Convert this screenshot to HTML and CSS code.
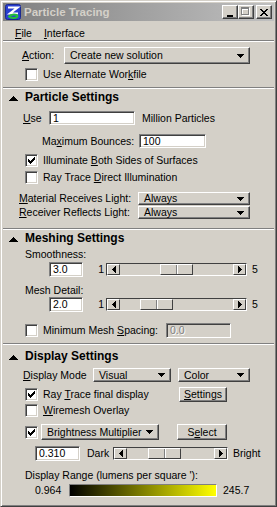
FILE: index.html
```html
<!DOCTYPE html>
<html lang="en">
  <head>
    <meta charset="UTF-8" />
    <meta name="viewport" content="width=device-width, initial-scale=1" />
    <title>Particle Tracing</title>
    <link rel="stylesheet" href="styles.css">
  </head>
  <body>
    <div class="window">
      <div class="titlebar">
        <svg class="app-icon" width="16" height="16" viewBox="0 0 16 16">
          <rect x="0.5" y="0.5" width="15" height="15" rx="2" fill="#2a3fd0" stroke="#1a2890" />
          <path d="M3 3.5 H12.5 L5 9.5 H13" fill="none" stroke="#fff" stroke-width="2.2" />
          <path d="M4 12.5 C6 9.5 12 10 12.5 12 C12 14.5 6 14.5 4 12.5 Z" fill="none" stroke="#22c03a" stroke-width="2" />
        </svg>
        <span class="title">Particle Tracing</span>
        <div class="caption-buttons">
          <span class="cap-btn">
            <svg width="8" height="9" viewBox="0 0 8 9" shape-rendering="crispEdges">
              <rect x="1" y="7" width="6" height="2" fill="#000" />
            </svg>
          </span>
          <span class="cap-btn">
            <svg width="10" height="10" viewBox="0 0 10 10" shape-rendering="crispEdges">
              <path d="M1 1h8v8h-8z M2 3v5h6v-5z" fill="#fff" fill-rule="evenodd" />
              <path d="M0 0h8v8h-8z M1 2v5h6v-5z" fill="#808080" fill-rule="evenodd" />
            </svg>
          </span>
          <span class="cap-btn close">
            <svg width="8" height="7" viewBox="0 0 8 7" shape-rendering="crispEdges">
              <path d="M0 0h2v1h1v1h2v-1h1v-1h2v1h-1v1h-1v1h-1v1h1v1h1v1h1v1h-2v-1h-1v-1h-2v1h-1v1h-2v-1h1v-1h1v-1h1v-1h-1v-1h-1v-1h-1z" fill="#000" />
            </svg>
          </span>
        </div>
      </div>

      <div class="menubar">
        <span class="menu-item"><u>F</u>ile</span>
        <span class="menu-item"><u>I</u>nterface</span>
      </div>
      <div class="groove"></div>

      <!-- Action -->
      <div class="row h17 mt-5 pl-19">
        <span class="lbl w-42"><u>A</u>ction:</span>
        <div class="dropdown w-186">
          <span>Create new solution</span>
          <svg class="dd-arrow" width="7" height="4" viewBox="0 0 7 4" shape-rendering="crispEdges"><path d="M0 0h7v1h-1v1h-1v1h-1v1h-1v-1h-1v-1h-1v-1h-1z" /></svg>
        </div>
      </div>
      <div class="row h13 mt-4 pl-22">
        <span class="checkbox"></span>
        <span class="cb-label">Use Alternate Wor<u>k</u>file</span>
      </div>
      <div class="groove mt-6"></div>

      <!-- Particle Settings -->
      <div class="section-head mt-1">
        <svg class="collapse" width="9" height="5" viewBox="0 0 9 5" shape-rendering="crispEdges"><path d="M4 0h1v1h1v1h1v1h1v1h1v1h-9v-1h1v-1h1v-1h1v-1h1z" /></svg>
        <span>Particle Settings</span>
      </div>
      <div class="row h14 mt-7 pl-20">
        <span class="lbl w-26"><u>U</u>se</span>
        <span class="field w-86">1</span>
        <span class="ml-7">Million Particles</span>
      </div>
      <div class="row h14 mt-9 pl-39">
        <span class="lbl w-97">Ma<u>x</u>imum Bounces:</span>
        <span class="field w-67">100</span>
      </div>
      <div class="row h13 mt-6 pl-22">
        <span class="checkbox checked"><svg width="7" height="7" viewBox="0 0 7 7" shape-rendering="crispEdges"><path d="M6 0h1v3h-1v1h-1v1h-1v1h-1v1h-1v-1h-1v-1h-1v-3h1v1h1v1h1v-1h1v-1h1z" /></svg></span>
        <span class="cb-label">Illuminate <u>B</u>oth Sides of Surfaces</span>
      </div>
      <div class="row h13 mt-4 pl-22">
        <span class="checkbox"></span>
        <span class="cb-label">Ray Trace <u>D</u>irect Illumination</span>
      </div>
      <div class="row h13 mt-8 pl-16">
        <span class="lbl w-119"><u>M</u>aterial Receives Light:</span>
        <div class="dropdown w-112">
          <span>Always</span>
          <svg class="dd-arrow" width="7" height="4" viewBox="0 0 7 4" shape-rendering="crispEdges"><path d="M0 0h7v1h-1v1h-1v1h-1v1h-1v-1h-1v-1h-1v-1h-1z" /></svg>
        </div>
      </div>
      <div class="row h13 mt-1 pl-16">
        <span class="lbl w-119"><u>R</u>eceiver Reflects Light:</span>
        <div class="dropdown w-112">
          <span>Always</span>
          <svg class="dd-arrow" width="7" height="4" viewBox="0 0 7 4" shape-rendering="crispEdges"><path d="M0 0h7v1h-1v1h-1v1h-1v1h-1v-1h-1v-1h-1v-1h-1z" /></svg>
        </div>
      </div>
      <div class="groove mt-9"></div>

      <!-- Meshing Settings -->
      <div class="section-head mt-1">
        <svg class="collapse" width="9" height="5" viewBox="0 0 9 5" shape-rendering="crispEdges"><path d="M4 0h1v1h1v1h1v1h1v1h1v1h-9v-1h1v-1h1v-1h1v-1h1z" /></svg>
        <span>Meshing Settings</span>
      </div>
      <div class="row h13 mt-3 pl-22">Smoothness:</div>
      <div class="row h15 mt-1 pl-46">
        <span class="field w-34">3.0</span>
        <span class="scale-min">1</span>
        <div class="slider w-141">
          <span class="arrow-btn"><svg width="4" height="7" viewBox="0 0 4 7" shape-rendering="crispEdges"><path d="M4 0v7h-1v-1h-1v-1h-1v-1h-1v-1h1v-1h1v-1h1v-1z" /></svg></span>
          <span class="track"><span class="thumb" style="margin-left: 40px"></span></span>
          <span class="arrow-btn"><svg width="4" height="7" viewBox="0 0 4 7" shape-rendering="crispEdges"><path d="M0 0v7h1v-1h1v-1h1v-1h1v-1h-1v-1h-1v-1h-1v-1z" /></svg></span>
        </div>
        <span class="ml-5">5</span>
      </div>
      <div class="row h13 mt-7 pl-22">Mesh Detail:</div>
      <div class="row h15 pl-46">
        <span class="field w-34">2.0</span>
        <span class="scale-min">1</span>
        <div class="slider w-141">
          <span class="arrow-btn"><svg width="4" height="7" viewBox="0 0 4 7" shape-rendering="crispEdges"><path d="M4 0v7h-1v-1h-1v-1h-1v-1h-1v-1h1v-1h1v-1h1v-1z" /></svg></span>
          <span class="track"><span class="thumb" style="margin-left: 20px"></span></span>
          <span class="arrow-btn"><svg width="4" height="7" viewBox="0 0 4 7" shape-rendering="crispEdges"><path d="M0 0v7h1v-1h1v-1h1v-1h1v-1h-1v-1h-1v-1h-1v-1z" /></svg></span>
        </div>
        <span class="ml-5">5</span>
      </div>
      <div class="row h15 mt-11 pl-22">
        <span class="checkbox"></span>
        <span class="cb-label w-123">Minimum Mesh <u>S</u>pacing:</span>
        <span class="field disabled w-65">0.0</span>
      </div>
      <div class="groove mt-5"></div>

      <!-- Display Settings -->
      <div class="section-head mt-4">
        <svg class="collapse" width="9" height="5" viewBox="0 0 9 5" shape-rendering="crispEdges"><path d="M4 0h1v1h1v1h1v1h1v1h1v1h-9v-1h1v-1h1v-1h1v-1h1z" /></svg>
        <span>Display Settings</span>
      </div>
      <div class="row h14 mt-5 pl-20">
        <span class="lbl w-70"><u>D</u>isplay Mode</span>
        <div class="dropdown w-78">
          <span>Visual</span>
          <svg class="dd-arrow" width="7" height="4" viewBox="0 0 7 4" shape-rendering="crispEdges"><path d="M0 0h7v1h-1v1h-1v1h-1v1h-1v-1h-1v-1h-1v-1h-1z" /></svg>
        </div>
        <div class="dropdown w-72 ml-7">
          <span>Color</span>
          <svg class="dd-arrow" width="7" height="4" viewBox="0 0 7 4" shape-rendering="crispEdges"><path d="M0 0h7v1h-1v1h-1v1h-1v1h-1v-1h-1v-1h-1v-1h-1z" /></svg>
        </div>
      </div>
      <div class="row h15 mt-5 pl-22">
        <span class="checkbox checked"><svg width="7" height="7" viewBox="0 0 7 7" shape-rendering="crispEdges"><path d="M6 0h1v3h-1v1h-1v1h-1v1h-1v1h-1v-1h-1v-1h-1v-3h1v1h1v1h1v-1h1v-1h1z" /></svg></span>
        <span class="cb-label w-136">Ray <u>T</u>race final display</span>
        <span class="push-btn w-48"><u>S</u>ettings</span>
      </div>
      <div class="row h13 mt-2 pl-22">
        <span class="checkbox"></span>
        <span class="cb-label"><u>W</u>iremesh Overlay</span>
      </div>
      <div class="row h16 mt-7 pl-22">
        <span class="checkbox checked"><svg width="7" height="7" viewBox="0 0 7 7" shape-rendering="crispEdges"><path d="M6 0h1v3h-1v1h-1v1h-1v1h-1v1h-1v-1h-1v-1h-1v-3h1v1h1v1h1v-1h1v-1h1z" /></svg></span>
        <div class="dropdown w-118 ml-3">
          <span>Brightness Multiplier</span>
          <svg class="dd-arrow" width="7" height="4" viewBox="0 0 7 4" shape-rendering="crispEdges"><path d="M0 0h7v1h-1v1h-1v1h-1v1h-1v-1h-1v-1h-1v-1h-1z" /></svg>
        </div>
        <span class="push-btn w-50 ml-18">S<u>e</u>lect</span>
      </div>
      <div class="row h15 mt-6 pl-32">
        <span class="field w-45">0.310</span>
        <span class="lbl w-33 pad-7">Dark</span>
        <div class="slider w-115">
          <span class="arrow-btn"><svg width="4" height="7" viewBox="0 0 4 7" shape-rendering="crispEdges"><path d="M4 0v7h-1v-1h-1v-1h-1v-1h-1v-1h1v-1h1v-1h1v-1z" /></svg></span>
          <span class="track"><span class="thumb" style="margin-left: 21px"></span></span>
          <span class="arrow-btn"><svg width="4" height="7" viewBox="0 0 4 7" shape-rendering="crispEdges"><path d="M0 0v7h1v-1h1v-1h1v-1h1v-1h-1v-1h-1v-1h-1v-1z" /></svg></span>
        </div>
        <span class="ml-5">Bright</span>
      </div>
      <div class="row h13 mt-8 pl-22">Display Range (lumens per square '):</div>
      <div class="row h13 mt-2 pl-32">
        <span class="lbl w-34">0.964</span>
        <span class="range-bar"></span>
        <span class="ml-6">245.7</span>
      </div>
    </div>
  </body>
</html>
```

FILE: styles.css
```css
:root {
  --face: #d4d0c8;
  --light: #ffffff;
  --shadow: #808080;
  --dark: #404040;
  --font-ui: 'Liberation Sans', Arial, sans-serif;
}
* {
  box-sizing: border-box;
}
html,
body {
  margin: 0;
  padding: 0;
  background: var(--face);
}
body {
  font-family: var(--font-ui);
  font-size: 10.5px;
  line-height: 13px;
  color: #000;
}
u {
  text-underline-offset: 1px;
}

/* window frame */
.window {
  width: 277px;
  height: 507px;
  padding: 2px;
  background: var(--face);
  border: 1px solid;
  border-color: var(--face) var(--dark) var(--dark) var(--face);
  box-shadow: inset 1px 1px var(--light), inset -1px -1px var(--shadow);
  display: flex;
  flex-direction: column;
}
.titlebar {
  height: 18px;
  flex: none;
  display: flex;
  align-items: center;
  padding: 0 2px;
  background: linear-gradient(to right, #808080, #c0c0c0);
}
.app-icon {
  display: block;
  flex: none;
}
.title {
  margin-left: 3px;
  font-size: 11.5px;
  font-weight: bold;
  color: var(--face);
}
.caption-buttons {
  margin-left: auto;
  display: flex;
}
.cap-btn {
  width: 16px;
  height: 14px;
  display: flex;
  align-items: center;
  justify-content: center;
  background: var(--face);
  border: 1px solid;
  border-color: var(--light) var(--dark) var(--dark) var(--light);
  box-shadow: inset -1px -1px var(--shadow);
}
.cap-btn.close {
  margin-left: 2px;
}
.cap-btn svg {
  display: block;
}
.menubar {
  height: 19px;
  flex: none;
  padding: 5px 0 0 6px;
  line-height: 14px;
  display: flex;
}
.menu-item {
  padding: 0 6px;
}
.groove {
  height: 2px;
  flex: none;
  border-top: 1px solid var(--shadow);
  border-bottom: 1px solid var(--light);
}

/* rows */
.row {
  display: flex;
  align-items: center;
  flex: none;
  white-space: nowrap;
}
.h13 { height: 13px; }
.h14 { height: 14px; }
.h15 { height: 15px; }
.h16 { height: 16px; }
.h17 { height: 17px; }
.mt-1 { margin-top: 1px; }
.mt-2 { margin-top: 2px; }
.mt-3 { margin-top: 3px; }
.mt-4 { margin-top: 4px; }
.mt-5 { margin-top: 5px; }
.mt-6 { margin-top: 6px; }
.mt-7 { margin-top: 7px; }
.mt-8 { margin-top: 8px; }
.mt-9 { margin-top: 9px; }
.mt-11 { margin-top: 11px; }
.pl-16 { padding-left: 16px; }
.pl-19 { padding-left: 19px; }
.pl-20 { padding-left: 20px; }
.pl-22 { padding-left: 22px; }
.pl-32 { padding-left: 32px; }
.pl-39 { padding-left: 39px; }
.pl-46 { padding-left: 46px; }
.ml-3 { margin-left: 3px; }
.ml-5 { margin-left: 5px; }
.ml-6 { margin-left: 6px; }
.ml-7 { margin-left: 7px; }
.ml-18 { margin-left: 18px; }
.pad-7 { padding-left: 7px; }

.w-26 { width: 26px; }
.w-33 { width: 33px; }
.w-34 { width: 34px; }
.w-42 { width: 42px; }
.w-45 { width: 45px; }
.w-48 { width: 48px; }
.w-50 { width: 50px; }
.w-65 { width: 65px; }
.w-67 { width: 67px; }
.w-70 { width: 70px; }
.w-72 { width: 72px; }
.w-78 { width: 78px; }
.w-86 { width: 86px; }
.w-97 { width: 97px; }
.w-112 { width: 112px; }
.w-115 { width: 115px; }
.w-118 { width: 118px; }
.w-119 { width: 119px; }
.w-123 { width: 123px; }
.w-136 { width: 136px; }
.w-141 { width: 141px; }
.w-186 { width: 186px; }

.lbl {
  flex: none;
}

/* section headers */
.section-head {
  height: 14px;
  flex: none;
  display: flex;
  align-items: center;
  padding-left: 6px;
  font-size: 12px;
  font-weight: bold;
  line-height: 14px;
}
.collapse {
  display: block;
  margin: 3px 7px 0 0;
  fill: #000;
}

/* controls */
.checkbox {
  width: 13px;
  height: 13px;
  flex: none;
  display: flex;
  align-items: center;
  justify-content: center;
  background: var(--light);
  border: 1px solid;
  border-color: var(--shadow) var(--light) var(--light) var(--shadow);
  box-shadow: inset 1px 1px var(--dark), inset -1px -1px var(--face);
}
.checkbox svg {
  display: block;
  fill: #000;
}
.cb-label {
  margin-left: 5px;
  flex: none;
}
.field {
  height: 100%;
  flex: none;
  padding: 0 3px;
  display: flex;
  align-items: center;
  background: var(--light);
  border: 1px solid;
  border-color: var(--shadow) var(--light) var(--light) var(--shadow);
  box-shadow: inset 1px 1px var(--dark), inset -1px -1px var(--face);
}
.field.disabled {
  background: var(--face);
  color: var(--shadow);
  text-shadow: 1px 1px var(--light);
}
.dropdown {
  height: 100%;
  flex: none;
  display: flex;
  align-items: center;
  justify-content: space-between;
  padding: 0 5px 0 5px;
  background: var(--face);
  border: 1px solid;
  border-color: var(--light) var(--dark) var(--dark) var(--light);
  box-shadow: inset -1px -1px var(--shadow);
}
.dd-arrow {
  display: block;
  fill: #000;
}
.push-btn {
  height: 100%;
  flex: none;
  display: flex;
  align-items: center;
  justify-content: center;
  background: var(--face);
  border: 1px solid;
  border-color: var(--light) var(--dark) var(--dark) var(--light);
  box-shadow: inset -1px -1px var(--shadow);
}
.scale-min {
  width: 23px;
  flex: none;
  padding-right: 2px;
  text-align: right;
}
.slider {
  height: 13px;
  flex: none;
  display: flex;
  border: 1px solid;
  border-color: var(--dark) var(--light) var(--light) var(--dark);
}
.arrow-btn {
  width: 13px;
  flex: none;
  display: flex;
  align-items: center;
  justify-content: center;
  background: var(--face);
  border: 1px solid;
  border-color: var(--light) var(--dark) var(--dark) var(--light);
}
.arrow-btn svg {
  display: block;
  fill: #000;
}
.track {
  flex: 1;
  display: flex;
  background: var(--face);
}
.thumb {
  width: 33px;
  flex: none;
  border: 1px solid;
  border-color: var(--light) var(--dark) var(--dark) var(--light);
  background: linear-gradient(
      to right,
      transparent 15px,
      var(--shadow) 15px,
      var(--shadow) 16px,
      var(--light) 16px,
      var(--light) 17px,
      transparent 17px
    ),
    var(--face);
}
.range-bar {
  width: 148px;
  height: 13px;
  flex: none;
  border: 1px solid;
  border-color: var(--shadow) var(--light) var(--light) var(--shadow);
  background: linear-gradient(to right, #000000, #ffff00);
}
```
